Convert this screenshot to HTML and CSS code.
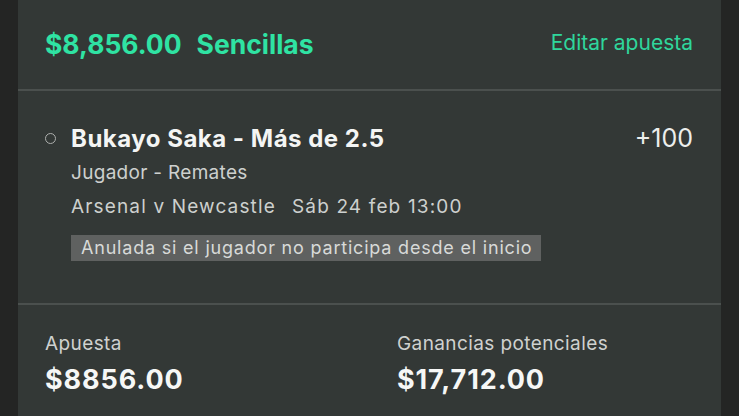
FILE: index.html
```html
<!DOCTYPE html>
<html lang="es">
<head>
<meta charset="utf-8">
<link rel="stylesheet" href="styles.css">
</head>
<body>
<div class="card">
  <div class="header">
    <div class="summary"><span>$8,856.00</span><span>Sencillas</span></div>
    <div class="edit">Editar apuesta</div>
  </div>
  <div class="selection">
    <div class="sel-row">
      <span class="radio"></span>
      <div class="sel-body">
        <div class="sel-title-row">
          <div class="sel-title">Bukayo Saka - Más de 2.5</div>
          <div class="odds">+100</div>
        </div>
        <div class="market">Jugador - Remates</div>
        <div class="event"><span>Arsenal v Newcastle</span><span>Sáb 24 feb 13:00</span></div>
        <div class="tag">Anulada si el jugador no participa desde el inicio</div>
      </div>
    </div>
  </div>
  <div class="totals">
    <div class="total">
      <div class="label">Apuesta</div>
      <div class="value">$8856.00</div>
    </div>
    <div class="total">
      <div class="label">Ganancias potenciales</div>
      <div class="value">$17,712.00</div>
    </div>
  </div>
</div>
</body>
</html>
```
FILE: styles.css
```css
html, body {
  margin: 0;
  padding: 0;
  height: 100%;
  background: #242524;
  overflow: hidden;
  font-family: Inter, "Noto Sans", sans-serif;
}
.card {
  margin: 0 18px;
  height: 100%;
  background: #333836;
  color: #d6d8d6;
}
.header {
  height: 89px;
  display: flex;
  align-items: center;
  justify-content: space-between;
  padding: 0 28px 0 27px;
  border-bottom: 2px solid #4b504e;
}
.summary {
  display: flex;
  gap: 15px;
  color: #2fe3a3;
  font-weight: 700;
  font-size: 26.5px;
  line-height: 32px;
  margin-top: -1px;
}
.edit {
  color: #2fd69c;
  font-size: 21px;
  line-height: 24px;
  margin-bottom: 4px;
}
.selection {
  height: 212px;
  border-bottom: 2px solid #4b504e;
  padding: 0 28px 0 27px;
}
.sel-row {
  display: flex;
  padding-top: 33px;
}
.radio {
  width: 9px;
  height: 9px;
  border: 1.5px solid #aeb0ae;
  border-radius: 50%;
  margin: 8.5px 0 0 -0.5px;
  flex: none;
}
.sel-body {
  flex: 1;
  margin-left: 15.5px;
}
.sel-title-row {
  display: flex;
  justify-content: space-between;
  align-items: baseline;
}
.sel-title {
  color: #f4f5f4;
  font-weight: 700;
  font-size: 24px;
  line-height: 28px;
  letter-spacing: 0.5px;
}
.odds {
  color: #eceeec;
  font-size: 25px;
  line-height: 28px;
}
.market, .event {
  font-size: 19px;
  line-height: 24px;
  color: #cdd0ce;
}
.market {
  margin-top: 8px;
  letter-spacing: 0.3px;
}
.event {
  display: flex;
  gap: 16px;
  margin-top: 10px;
  letter-spacing: 1.15px;
}
.tag {
  display: inline-block;
  margin-top: 16px;
  background: #5f6160;
  color: #d8dad8;
  font-size: 18px;
  line-height: 20px;
  padding: 3px 9px 3px 10px;
  letter-spacing: 0.8px;
}
.totals {
  display: grid;
  grid-template-columns: 352px 1fr;
  padding: 27px 28px 0 27px;
}
.label {
  font-size: 19px;
  line-height: 24px;
  letter-spacing: 0.4px;
  color: #cfd1cf;
}
.value {
  margin-top: 8px;
  font-size: 27px;
  line-height: 32px;
  letter-spacing: 0.9px;
  font-weight: 700;
  color: #f6f7f6;
}
```
